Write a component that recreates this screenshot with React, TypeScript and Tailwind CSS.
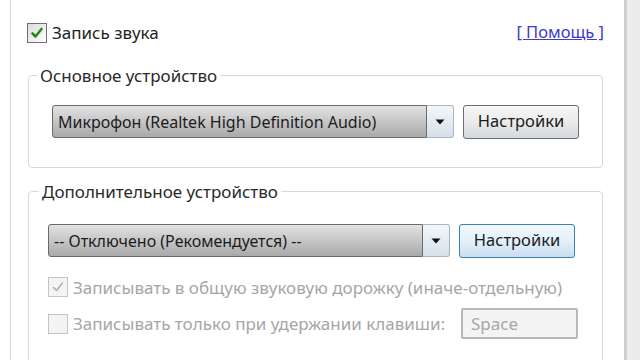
import React from "react";

const font = { fontFamily: '"Noto Sans", "DejaVu Sans", sans-serif' };

function Check({ checked, disabled }: { checked?: boolean; disabled?: boolean }) {
  return (
    <span
      className={
        "flex h-[20px] w-[20px] shrink-0 items-center justify-center border " +
        (disabled
          ? "border-[#c4c4c4] bg-[#f4f4f4]"
          : "border-[#707070] bg-gradient-to-br from-[#dcdcdc] to-[#ffffff]")
      }
    >
      {checked && (
        <svg width="14" height="14" viewBox="0 0 14 14">
          <path
            d="M2.5 7.5 L5.5 10.5 L11.5 3"
            fill="none"
            stroke={disabled ? "#b0b0b0" : "#2a8a1e"}
            strokeWidth={disabled ? 1.6 : 2.6}
            strokeLinecap="round"
            strokeLinejoin="round"
          />
        </svg>
      )}
    </span>
  );
}

function Combo({ text }: { text: string }) {
  return (
    <div className="flex h-[33px] w-[402px] shrink-0">
      <div className="flex flex-1 items-center rounded-l-[3px] border border-[#6a6a6a] bg-gradient-to-b from-[#e2e2e2] via-[#c6c6c6] to-[#a9a9a9] pl-[5px] text-[16px] text-[#1c1c1c]">
        {text}
      </div>
      <div className="flex w-[27px] items-center justify-center rounded-r-[3px] border border-l-0 border-[#a9b6c2] bg-gradient-to-b from-[#f3f7fb] to-[#d6e0ea]">
        <svg width="10" height="6" viewBox="0 0 10 6">
          <path d="M0.5 0.5 L9.5 0.5 L5 5.5 Z" fill="#111" />
        </svg>
      </div>
    </div>
  );
}

function Btn({ hot }: { hot?: boolean }) {
  return (
    <div
      className={
        "flex h-[34px] w-[116px] shrink-0 items-center justify-center rounded-[3px] border text-[16.5px] text-[#1c1c1c] " +
        (hot
          ? "border-[#3c7fb1] bg-gradient-to-b from-[#f4f9fd] via-[#e3f0fb] to-[#c9ddef]"
          : "border-[#6e6e6e] bg-gradient-to-b from-[#f6f6f6] via-[#ebebeb] to-[#d4d8de]")
      }
    >
      Настройки
    </div>
  );
}

export default function App() {
  return (
    <div className="flex h-[360px] w-[640px] overflow-hidden bg-white" style={font}>
      <div className="w-[11px] shrink-0 border-r border-[#d6d6d6]" />
      <div className="flex flex-1 flex-col pl-[16px] pr-[21px] pt-[20px]">
        <div className="flex items-center">
          <Check checked />
          <span className="ml-[5px] text-[17px] text-[#1e1e1e]">Запись звука</span>
          <span className="ml-auto mr-[-1px] text-[16.5px] text-[#3b3bcc] underline">[ Помощь ]</span>
        </div>

        <fieldset className="mt-[20px] ml-[1px] rounded-[4px] border border-[#d6d9dc] px-[23px] pb-[28px]">
          <legend className="ml-[-15px] px-[3px] text-[17px] leading-[20px] text-[#2a2a2a]">
            Основное устройство
          </legend>
          <div className="mt-[19px] flex items-center gap-[9px]">
            <Combo text="Микрофон (Realtek High Definition Audio)" />
            <Btn />
          </div>
        </fieldset>

        <fieldset className="mt-[14px] ml-[1px] rounded-[4px] border border-[#d6d9dc] pl-[19px] pr-[24px] pb-[30px]">
          <legend className="ml-[-9px] px-[3px] text-[17px] leading-[20px] text-[#2a2a2a]">
            Дополнительное устройство
          </legend>
          <div className="mt-[22px] flex items-center gap-[9px]">
            <Combo text="-- Отключено (Рекомендуется) --" />
            <Btn hot />
          </div>
          <div className="mt-[17px] flex items-center">
            <Check checked disabled />
            <span className="ml-[5px] text-[17px] text-[#a6a6a6]">
              Записывать в общую звуковую дорожку (иначе-отдельную)
            </span>
          </div>
          <div className="mt-[8px] flex items-center">
            <Check disabled />
            <span className="ml-[5px] text-[17px] text-[#a6a6a6]">
              Записывать только при удержании клавиши:
            </span>
            <div className="ml-auto flex h-[31px] w-[117px] items-center rounded-[2px] border-2 border-[#b8b8b8] bg-[#f4f4f4] pl-[8px] text-[17px] text-[#a6a6a6]">
              Space
            </div>
          </div>
        </fieldset>
      </div>
      <div className="w-[16px] shrink-0 border-l-[3px] border-[#cfcfcf] bg-[#ececec]" />
    </div>
  );
}
